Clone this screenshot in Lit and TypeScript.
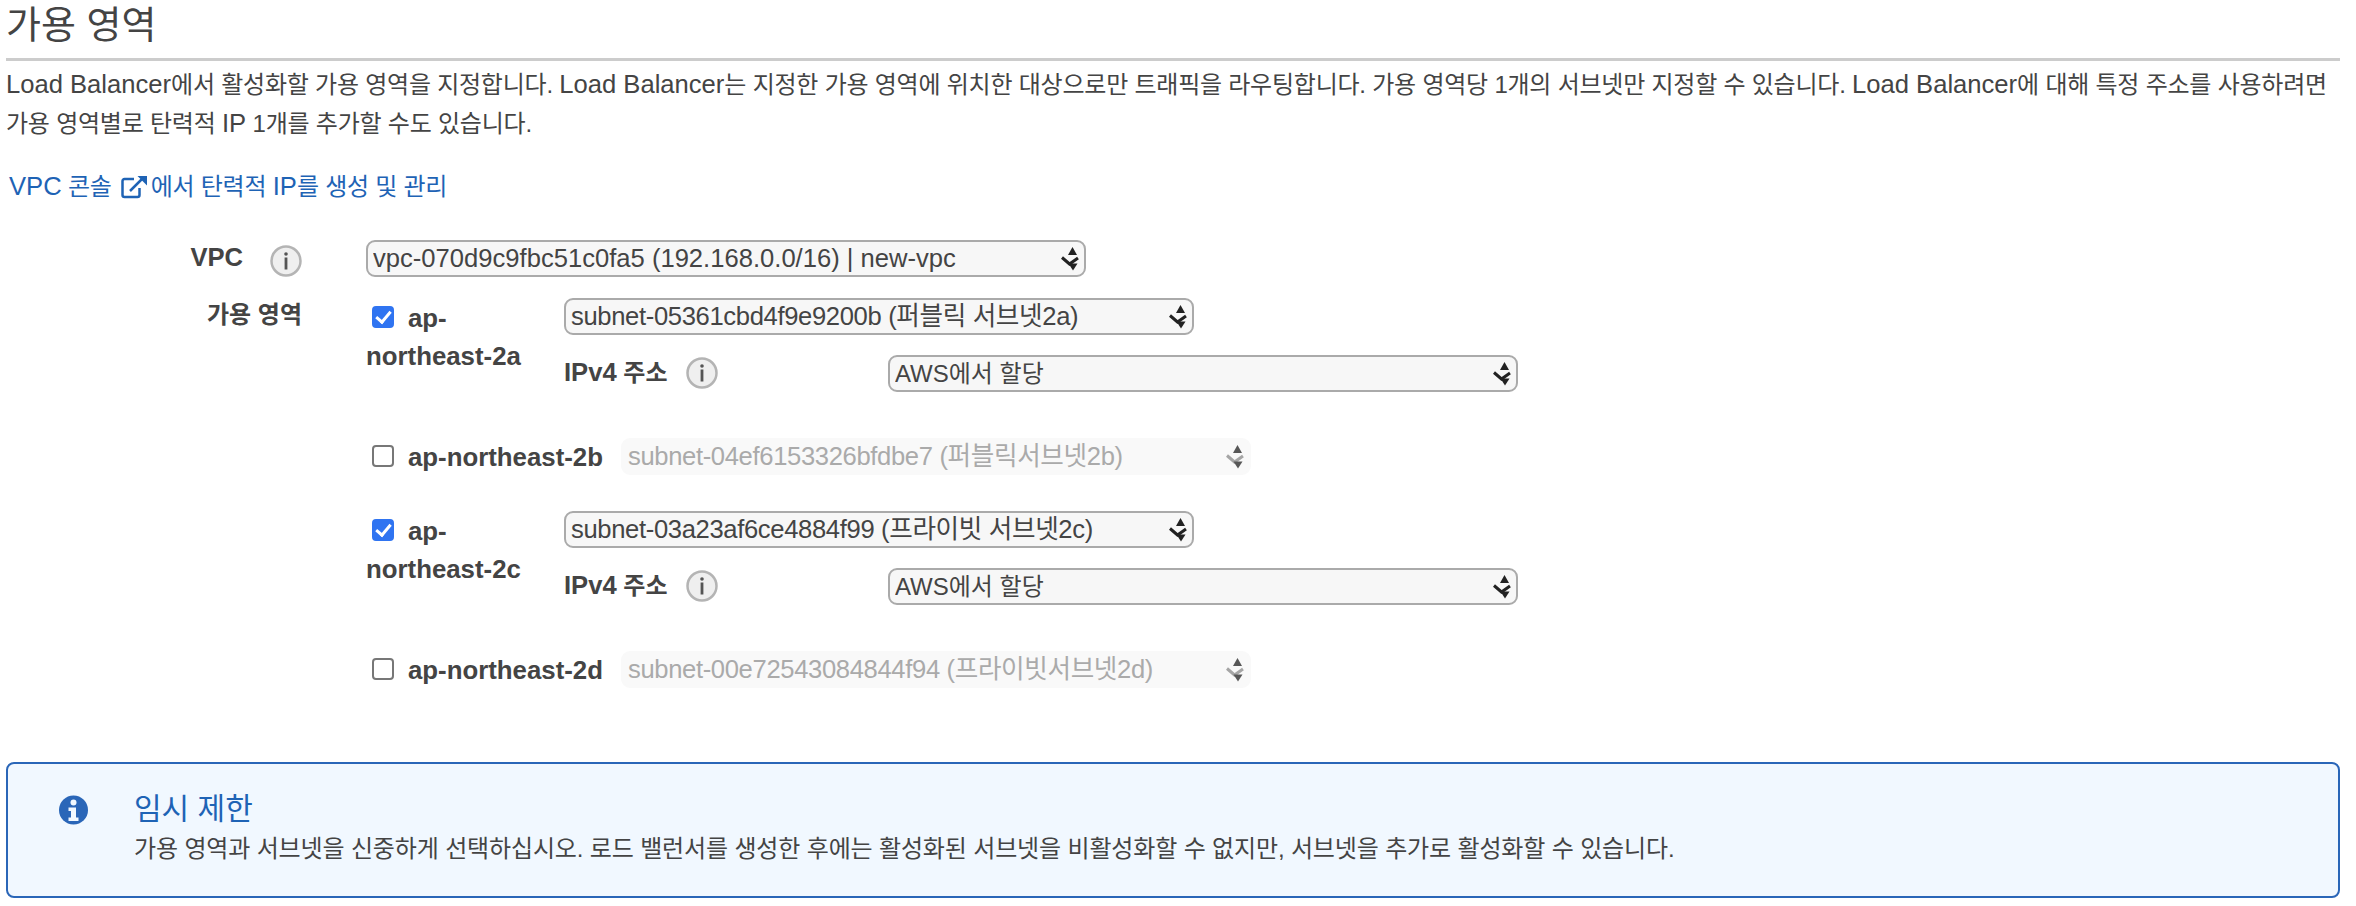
import { LitElement, html, css } from 'lit'
import { customElement, state } from 'lit/decorators.js'

const infoIcon = html`
  <svg class="info" viewBox="0 0 32 32">
    <circle cx="16" cy="16" r="14.500" fill="#efefef" stroke="#b4b4b4" stroke-width="2.500"></circle>
    <circle cx="16" cy="9" r="1.800" fill="#555"></circle>
    <rect x="14.600" y="12.500" width="2.800" height="12" fill="#555"></rect>
  </svg>
`

const selectArrow = html`
  <svg class="arrow" viewBox="0 0 18 24">
    <path d="M11.500 0L7 8h9z" fill="#222"></path>
    <path d="M1 10.500l7.500 6.500 8.500-6" fill="none" stroke="currentColor" stroke-width="3"></path>
    <path d="M7.500 16.500h9l-4.500 7z" fill="#222"></path>
  </svg>
`

const zones = [
  { name: 'ap-northeast-2a', subnet: 'subnet-05361cbd4f9e9200b (퍼블릭 서브넷2a)' },
  { name: 'ap-northeast-2b', subnet: 'subnet-04ef6153326bfdbe7 (퍼블릭서브넷2b)' },
  { name: 'ap-northeast-2c', subnet: 'subnet-03a23af6ce4884f99 (프라이빗 서브넷2c)' },
  { name: 'ap-northeast-2d', subnet: 'subnet-00e72543084844f94 (프라이빗서브넷2d)' }
]

@customElement('app-root')
export class AppRoot extends LitElement {
  static styles = css`
    :host {
      display: block;
      padding: 0 16px 0 6px;
      background: white;
      color: #444;
      font-family: "Liberation Sans", "Noto Sans CJK KR", sans-serif;
      font-size: 24px;
      line-height: 38px;
    }

    /* latin runs are set a bit larger than the hangul around them */
    .latin {
      font-size: 25.6px;
      letter-spacing: 0;
      line-height: 0;
    }

    h2 {
      margin: 0;
      height: 58px;
      border-bottom: 3px solid #ccc;
      font-size: 38px;
      font-weight: 400;
      line-height: 50px;
    }

    .desc {
      margin: 4px 0 0;
      line-height: 39px;
      letter-spacing: -0.23px;
      white-space: nowrap;
    }

    .console-link {
      display: flex;
      align-items: center;
      margin: 25px 0 0 3px;
      color: #1e63b5;
      letter-spacing: -0.25px;
    }

    .console-link svg {
      width: 27px;
      height: 24px;
      margin: 0 3px 0 9px;
    }

    .form {
      margin-top: 34px;
    }

    .form-row {
      display: grid;
      grid-template-columns: 296px 1fr;
      column-gap: 64px;
    }

    .form-row + .form-row {
      margin-top: 21px;
    }

    .form-label {
      display: flex;
      justify-content: flex-end;
      align-items: flex-start;
      gap: 27px;
      margin-top: -2px;
      font-weight: 700;
    }

    .form-label .latin {
      line-height: 38px;
    }

    .form-label .info {
      margin-top: 7px;
    }

    .info {
      width: 32px;
      height: 32px;
      flex: none;
    }

    .select-wrap {
      position: relative;
      color: #222;
    }

    .select-wrap.disabled {
      color: #8a8a8a;
    }

    select {
      display: block;
      width: 100%;
      height: 37px;
      padding: 0 30px 0 5px;
      appearance: none;
      border: 2px solid #aaa;
      border-radius: 9px;
      background: #f7f7f7;
      color: #444;
      font: inherit;
      line-height: 33px;
      outline: none;
    }

    select.latin {
      font-size: 25.6px;
      line-height: 33px;
    }

    select.mixed {
      font-size: 25.6px;
      letter-spacing: -0.35px;
    }

    select:disabled {
      border-color: #f9f9f9;
      background: #f9f9f9;
      color: #aaa;
      opacity: 1;
    }

    .arrow {
      position: absolute;
      top: 7px;
      right: 7px;
      width: 18px;
      height: 24px;
      pointer-events: none;
    }

    .disabled .arrow {
      opacity: 0.75;
    }

    .vpc-select {
      width: 720px;
    }

    .zone {
      display: flex;
      align-items: flex-start;
      margin-bottom: 35px;
    }

    .zone.active {
      margin-bottom: 46px;
    }

    .zone:last-child {
      margin-bottom: 0;
    }

    .zone-name {
      display: block;
      font-weight: 700;
      font-size: 25.8px;
      padding-top: 1px;
    }

    .zone.active .zone-name {
      flex: none;
      width: 198px;
    }

    .zone:not(.active) .zone-name {
      padding-top: 0;
      margin-right: 18px;
      white-space: nowrap;
    }

    input[type='checkbox'] {
      position: relative;
      width: 22px;
      height: 22px;
      margin: 0 14px 0 6px;
      appearance: none;
      border: 2px solid #777;
      border-radius: 4px;
      background: white;
      vertical-align: -1px;
    }

    input[type='checkbox']:checked {
      border-color: #2f74f1;
      background: #2f74f1;
    }

    input[type='checkbox']:checked::before {
      content: '';
      position: absolute;
      left: 5px;
      top: 0px;
      width: 6px;
      height: 12px;
      border: solid white;
      border-width: 0 3px 3px 0;
      transform: rotate(40deg);
    }

    .subnet-select {
      width: 630px;
    }

    .ipv4 {
      display: grid;
      grid-template-columns: 324px 630px;
      align-items: center;
      margin-top: 19px;
    }

    .ipv4-label {
      display: flex;
      align-items: center;
      gap: 19px;
      font-weight: 700;
    }

    .alert {
      display: grid;
      grid-template-columns: 29px 1fr;
      column-gap: 46px;
      height: 136px;
      box-sizing: border-box;
      margin-top: 73px;
      padding: 31px 0 0 51px;
      border: 2px solid #2a66b8;
      border-radius: 8px;
      background: #f1f8ff;
    }

    .alert svg {
      width: 29px;
      height: 30px;
    }

    .alert-title {
      margin-top: -4px;
      color: #1e63b5;
      font-size: 30px;
      line-height: 36px;
    }

    .alert-body {
      margin-top: 4px;
      line-height: 36px;
      letter-spacing: -0.15px;
    }
  `

  @state() private _active = [true, false, true, false]

  private _toggle(i: number) {
    this._active = this._active.map((v, j) => (j === i ? !v : v))
  }

  private _select(label: string, kind = '', disabled = false) {
    return html`
      <div class="select-wrap ${disabled ? 'disabled' : ''}">
        <select class=${kind} ?disabled=${disabled}><option>${label}</option></select>
        ${selectArrow}
      </div>
    `
  }

  render() {
    const lb = html`<span class="latin">Load Balancer</span>`
    return html`
      <h2>가용 영역</h2>
      <p class="desc">${lb}에서 활성화할 가용 영역을 지정합니다. ${lb}는 지정한 가용 영역에 위치한 대상으로만 트래픽을 라우팅합니다. 가용 영역당 1개의 서브넷만 지정할 수 있습니다. ${lb}에 대해 특정 주소를 사용하려면<br>가용 영역별로 탄력적 <span class="latin">IP</span> 1개를 추가할 수도 있습니다.</p>

      <div class="console-link">
        <span><span class="latin">VPC</span> 콘솔</span>
        <svg viewBox="0 0 27 24" fill="none" stroke="currentColor" stroke-width="2.500">
          <path d="M13 4H3.500A2 2 0 0 0 1.500 6v14a2 2 0 0 0 2 2h13a2 2 0 0 0 2-2v-7"></path>
          <path d="M9 16L21 4"></path>
          <path d="M16.500 1H26v9.500z" fill="currentColor" stroke="none"></path>
        </svg>
        <span>에서 탄력적 <span class="latin">IP</span>를 생성 및 관리</span>
      </div>

      <div class="form">
        <div class="form-row">
          <div class="form-label"><span class="latin">VPC</span>${infoIcon}</div>
          <div class="vpc-select">${this._select('vpc-070d9c9fbc51c0fa5 (192.168.0.0/16) | new-vpc', 'latin')}</div>
        </div>
        <div class="form-row">
          <div class="form-label"><span>가용 영역</span></div>
          <div>
            ${zones.map((zone, i) => {
              const active = this._active[i]
              return html`
                <div class="zone ${active ? 'active' : ''}">
                  <label class="zone-name">
                    <input type="checkbox" .checked=${active} @change=${() => this._toggle(i)} />${zone.name}
                  </label>
                  <div>
                    <div class="subnet-select">${this._select(zone.subnet, 'mixed', !active)}</div>
                    ${active ? html`
                      <div class="ipv4">
                        <div class="ipv4-label"><span><span class="latin">IPv4</span> 주소</span>${infoIcon}</div>
                        ${this._select('AWS에서 할당')}
                      </div>
                    ` : ''}
                  </div>
                </div>
              `
            })}
          </div>
        </div>
      </div>

      <div class="alert">
        <svg viewBox="0 0 29 30">
          <circle cx="14.500" cy="15" r="14.500" fill="#2a66b8"></circle>
          <circle cx="14.500" cy="7.500" r="3" fill="#f1f8ff"></circle>
          <path d="M9.500 12.500h7.500v10h2.500v3.500h-10v-3.500h2.500v-6.500h-2.500z" fill="#f1f8ff"></path>
        </svg>
        <div>
          <div class="alert-title">임시 제한</div>
          <div class="alert-body">가용 영역과 서브넷을 신중하게 선택하십시오. 로드 밸런서를 생성한 후에는 활성화된 서브넷을 비활성화할 수 없지만, 서브넷을 추가로 활성화할 수 있습니다.</div>
        </div>
      </div>
    `
  }
}

declare global {
  interface HTMLElementTagNameMap {
    'app-root': AppRoot
  }
}
